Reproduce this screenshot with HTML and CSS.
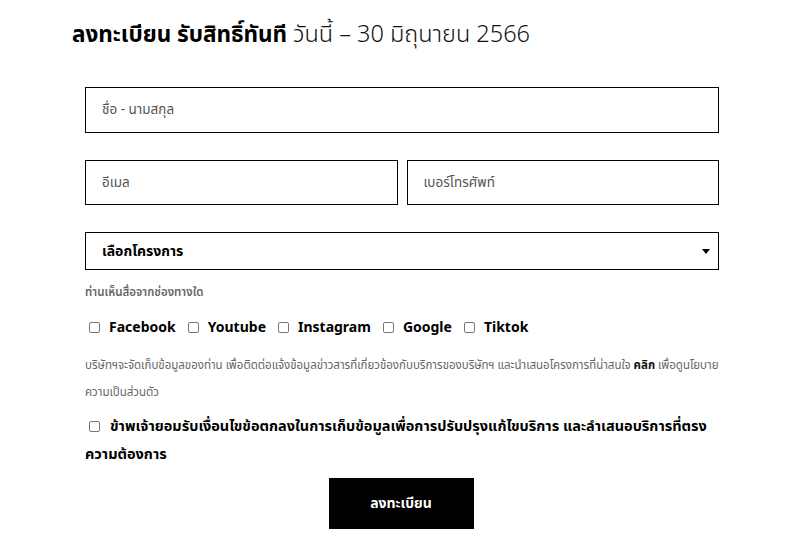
FILE: index.html
```html
<!DOCTYPE html>
<html lang="th">
<head>
<meta charset="utf-8">
<link rel="stylesheet" href="styles.css">
</head>
<body>
<div class="page">
  <h1 class="title"><b>ลงทะเบียน รับสิทธิ์ทันที</b> <span class="light">วันนี้ – 30 มิถุนายน 2566</span></h1>
  <form class="form">
    <div class="field full"><span class="ph">ชื่อ - นามสกุล</span></div>
    <div class="row">
      <div class="field half"><span class="ph">อีเมล</span></div>
      <div class="field half"><span class="ph">เบอร์โทรศัพท์</span></div>
    </div>
    <div class="select"><span>เลือกโครงการ</span>
      <svg class="caret" width="8" height="5" viewBox="0 0 8 5"><path d="M0 0h8L4 5z" fill="#000"/></svg>
    </div>
    <p class="label">ท่านเห็นสื่อจากช่องทางใด</p>
    <div class="checks">
      <label class="chk"><span class="box"></span>Facebook</label>
      <label class="chk"><span class="box"></span>Youtube</label>
      <label class="chk"><span class="box"></span>Instagram</label>
      <label class="chk"><span class="box"></span>Google</label>
      <label class="chk"><span class="box"></span>Tiktok</label>
    </div>
    <p class="consent">บริษัทฯจะจัดเก็บข้อมูลของท่าน เพื่อติดต่อแจ้งข้อมูลข่าวสารที่เกี่ยวข้องกับบริการของบริษัทฯ และนำเสนอโครงการที่น่าสนใจ <b>คลิก</b> เพื่อดูนโยบาย<br>ความเป็นส่วนตัว</p>
    <p class="agree"><span class="box"></span>ข้าพเจ้ายอมรับเงื่อนไขข้อตกลงในการเก็บข้อมูลเพื่อการปรับปรุงแก้ไขบริการ และลำเสนอบริการที่ตรง<br>ความต้องการ</p>
    <div class="actions"><span class="btn">ลงทะเบียน</span></div>
  </form>
</div>
</body>
</html>
```
FILE: styles.css
```css
* { box-sizing: border-box; }
body { margin: 0; background: #fff; font-family: "Noto Sans", "Noto Sans Thai", "Liberation Sans", sans-serif; color: #000; }
.page { padding: 16px 0 0 72px; width: 800px; }
.title { margin: 0; font-size: 22.5px; font-weight: 400; line-height: 34px; color: #000; white-space: nowrap; }
.title b { font-weight: 700; }
.title .light { font-size: 23.5px; font-weight: 300; color: #111; }
.form { width: 634px; margin: 36px 0 0 13px; }
.field { border: 1px solid #000; height: 46px; display: flex; align-items: center; padding: 0 16px; }
.ph { font-size: 13.5px; color: #555; }
.row { display: flex; gap: 9px; margin-top: 27px; }
.half { flex: 1; height: 45px; }
.select { margin-top: 27px; border: 1px solid #000; height: 38px; display: flex; align-items: center; justify-content: space-between; padding: 0 8px 0 16px; font-size: 14px; font-weight: 700; }
.caret { margin-top: 1px; }
.label { margin: 14px 0 0; font-size: 11.5px; font-weight: 600; color: #666; line-height: 16px; }
.checks { display: flex; gap: 12px; margin-top: 16px; padding-left: 4px; }
.chk { display: flex; align-items: center; font-size: 14px; font-weight: 700; line-height: 22px; }
.box { display: inline-block; width: 11px; height: 11px; border: 1px solid #767676; border-radius: 2px; margin-right: 9px; background: #fff; }
.consent { margin: 13px 0 0; font-size: 11.5px; line-height: 27px; color: #666; }
.consent b { color: #111; }
.agree { margin: 6px 0 0; font-size: 14.5px; font-weight: 700; line-height: 28px; }
.agree .box { margin: 0 10px 0 4px; vertical-align: -1px; }
.actions { display: flex; justify-content: center; margin-top: 11px; padding-right: 2px; }
.btn { width: 145px; height: 51px; background: #000; color: #fff; font-weight: 700; font-size: 14px; display: flex; align-items: center; justify-content: center; }
```
